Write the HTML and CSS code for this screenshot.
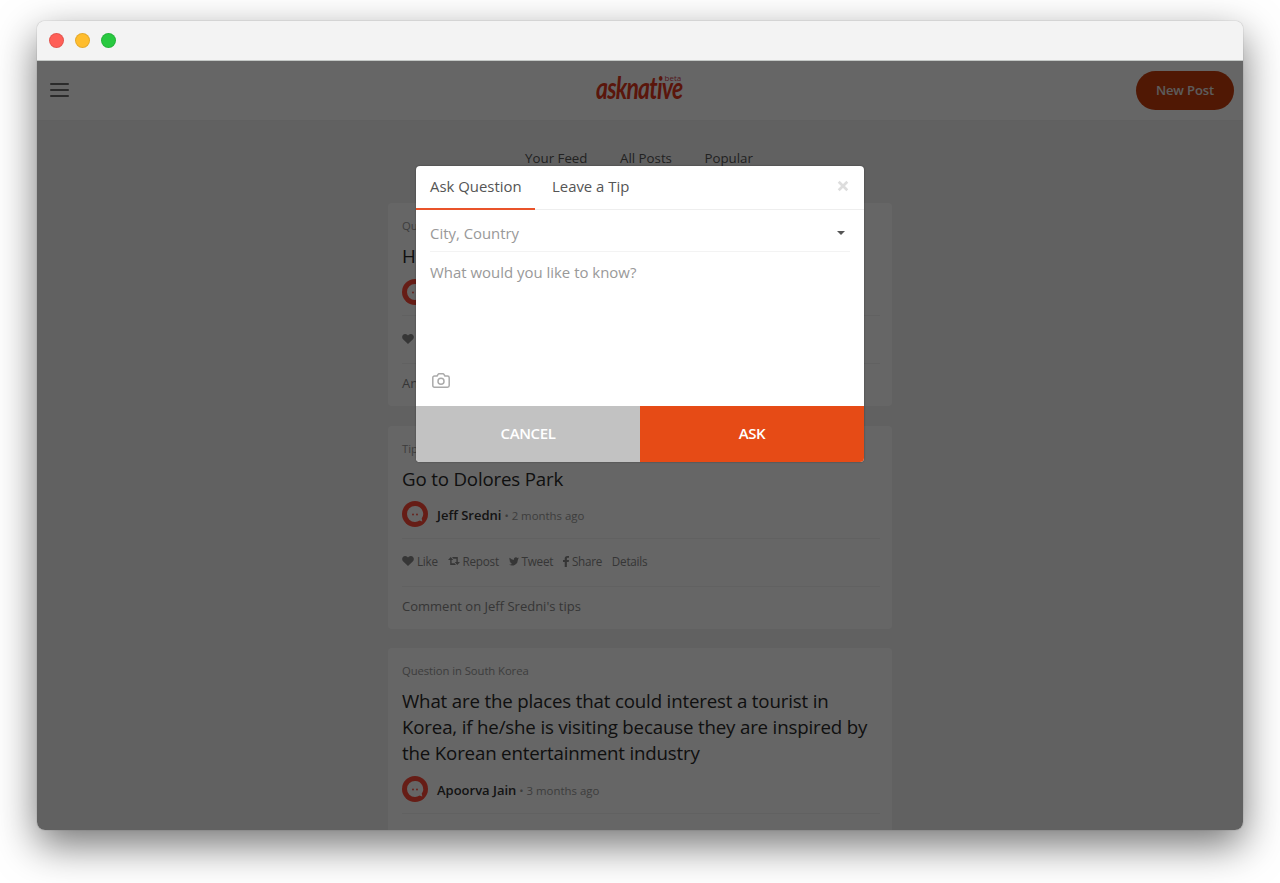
FILE: index.html
```html
<!DOCTYPE html>
<html lang="en">
<head>
<meta charset="utf-8">
<title>asknative</title>
<link rel="stylesheet" href="styles.css">
</head>
<body>
<svg class="defs" width="0" height="0">
  <symbol id="avatar" viewBox="0 0 26 26"><circle cx="13" cy="13" r="13" class="av-ring"/><path class="av-bubble" d="M13 5a8 8 0 1 0 0 16c1.800 0 3.200-.5 4.500-1.400l2.800.9-.6-2.900A8 8 0 0 0 13 5z"/><circle cx="11" cy="13.500" r=".9" class="av-ring"/><circle cx="15" cy="13.500" r=".9" class="av-ring"/></symbol>
  <symbol id="heart" viewBox="0 0 12 10"><path d="M6 10 1 5.300C-.7 3.500.2 0 3.200 0 4.600 0 5.500.8 6 1.600 6.500.8 7.400 0 8.800 0c3 0 3.900 3.500 2.200 5.300z"/></symbol>
  <symbol id="repost" viewBox="0 0 12 8"><path d="M2.700 0 5.300 3H3.600v3.200h3L8 8H2.200V3H0zM9.300 8 6.700 5h1.700V1.800h-3L4 0h5.800v5H12z"/></symbol>
  <symbol id="tweet" viewBox="0 0 24 20"><path d="M24 2.400a10 10 0 0 1-2.800.8A5 5 0 0 0 23.300.5a10 10 0 0 1-3.100 1.200 4.900 4.900 0 0 0-8.400 4.500A14 14 0 0 1 1.700 1a4.900 4.900 0 0 0 1.500 6.600A5 5 0 0 1 1 7a4.900 4.900 0 0 0 3.900 4.900 5 5 0 0 1-2.200.1 4.900 4.900 0 0 0 4.600 3.400A10 10 0 0 1 0 17.400a14 14 0 0 0 21.500-12.400A10 10 0 0 0 24 2.400z"/></symbol>
  <symbol id="share" viewBox="0 0 6 11"><path d="M6 0v1.800H4.900c-.8 0-1 .4-1 1V4H6l-.3 2H3.900v5H1.700V6H0V4h1.700V2.500C1.700.9 2.700 0 4.300 0z"/></symbol>
</svg>
<div class="window">
  <div class="titlebar"><i class="dot red"></i><i class="dot yellow"></i><i class="dot green"></i></div>
  <div class="page">
    <header class="header">
      <div class="menu"><i></i><i></i><i></i></div>
      <div class="logo"><span class="logo-name">asknative</span><span class="beta">beta</span></div>
      <button class="new-post">New Post</button>
    </header>
    <nav class="nav"><a>Your Feed</a><a>All Posts</a><a>Popular</a></nav>
    <main class="feed">
      <article class="card">
        <div class="kind">Qu</div>
        <h2>H</h2>
        <div class="author"><svg class="avatar"><use href="#avatar"/></svg></div>
        <div class="actions"><span><svg class="heart"><use href="#heart"/></svg></span></div>
        <div class="reply">An</div>
      </article>
      <article class="card">
        <div class="kind">Tip</div>
        <h2>Go to Dolores Park</h2>
        <div class="author"><svg class="avatar"><use href="#avatar"/></svg><b>Jeff Sredni</b><span>• 2 months ago</span></div>
        <div class="actions">
          <span><svg class="heart"><use href="#heart"/></svg>Like</span>
          <span><svg class="repost"><use href="#repost"/></svg>Repost</span>
          <span><svg class="tweet"><use href="#tweet"/></svg>Tweet</span>
          <span><svg class="share"><use href="#share"/></svg>Share</span>
          <span>Details</span>
        </div>
        <div class="reply">Comment on Jeff Sredni's tips</div>
      </article>
      <article class="card">
        <div class="kind">Question in South Korea</div>
        <h2>What are the places that could interest a tourist in<br>Korea, if he/she is visiting because they are inspired by<br>the Korean entertainment industry</h2>
        <div class="author"><svg class="avatar"><use href="#avatar"/></svg><b>Apoorva Jain</b><span>• 3 months ago</span></div>
        <div class="actions"></div>
      </article>
    </main>
    <div class="overlay">
      <section class="modal">
        <div class="tabs"><a class="tab active">Ask Question</a><a class="tab">Leave a Tip</a>
          <svg class="close" viewBox="0 0 12 12"><path d="M1.700 1.700l8.600 8.600M10.300 1.700l-8.600 8.600"/></svg>
        </div>
        <div class="city"><span>City, Country</span><i class="caret"></i></div>
        <div class="question">What would you like to know?</div>
        <svg class="camera" viewBox="0 0 18 15"><path d="M2.500 3h2.600l1-1.700q.3-.5.900-.5h4q.6 0 .9.500l1 1.700h2.600q1.700 0 1.700 1.700v7.800q0 1.700-1.700 1.700h-13q-1.700 0-1.700-1.700V4.700Q.8 3 2.500 3z"/><circle cx="9" cy="8.200" r="3"/></svg>
        <div class="buttons"><button class="cancel">CANCEL</button><button class="ask">ASK</button></div>
      </section>
    </div>
  </div>
</div>
</body>
</html>
```
FILE: styles.css
```css
* { box-sizing: border-box; }
body { margin: 0; height: 883px; overflow: hidden; background: #fff; font-family: "Open Sans", sans-serif; padding: 21px 37px; }
.defs { position: absolute; }
button { border: 0; font-family: inherit; padding: 0; }
.window { width: 1206px; height: 809px; border-radius: 8px; overflow: hidden; box-shadow: 0 0 1px rgba(0,0,0,.5), 0 15px 40px rgba(0,0,0,.55); }
.titlebar { height: 40px; background: #f3f3f3; border-bottom: 1px solid #c4c8c6; display: flex; align-items: center; gap: 11px; padding-left: 12px; }
.dot { width: 15px; height: 15px; border-radius: 50%; border: 1px solid rgba(0,0,0,.1); }
.red { background: #ff5f57; }
.yellow { background: #ffbd2e; }
.green { background: #28c940; }
.page { position: relative; height: 769px; background: #f3f3f3; overflow: hidden; }
.header { height: 60px; background: #fff; border-bottom: 1px solid #f0f0f0; display: grid; grid-template-columns: 1fr auto 1fr; align-items: center; padding: 0 9px 0 13px; }
.menu { display: flex; flex-direction: column; gap: 4px; width: 19px; margin-bottom: 1px; }
.menu i { height: 2px; background: #6b6b6b; border-radius: 1px; }
.logo { width: 93px; height: 38px; margin-bottom: 5px; display: grid; color: #e2381c; }
.logo > * { grid-area: 1 / 1; }
.logo-name { font: italic 700 30px/36px Lato, sans-serif; letter-spacing: -1px; transform: scaleX(.765); transform-origin: 0 0; white-space: nowrap; width: 0; }
.beta { margin: 6px 0 0 69px; font-size: 8px; line-height: 6px; height: 6px; color: #d04050; }
.new-post { justify-self: end; width: 98px; height: 39px; border-radius: 20px; background: #c93c0b; color: #e6e6e6; font-size: 13px; font-weight: 600; letter-spacing: -.1px; padding-bottom: 1px; }
.nav { height: 82px; display: flex; justify-content: center; gap: 32.500px; padding: 27px 2px 0 0; font-size: 13.300px; line-height: 20px; color: #555; }
.feed { width: 504px; margin: 0 auto; display: flex; flex-direction: column; gap: 19.500px; }
.card { background: #fff; border-radius: 4px; padding: 14px 12px 14px 14px; height: 203px; flex: none; }
.kind { font-size: 11.300px; line-height: 18px; letter-spacing: -.08px; color: #999; }
.card h2 { margin: 8px 0 9px; font-weight: 400; font-size: 18.700px; letter-spacing: -.17px; line-height: 26.200px; color: #2a2a2a; white-space: nowrap; }
.author { display: flex; align-items: center; height: 38px; padding-bottom: 10px; border-bottom: 1px solid #f3f3f3; font-size: 11.400px; color: #999; }
.author b { font-size: 13px; font-weight: 600; color: #333; margin: 0 3px 0 9px; padding-top: 1px; }
.author span { padding-top: 2px; }
.avatar { width: 26px; height: 26px; }
.av-ring { fill: #ff4a38; }
.av-bubble { fill: #fff; }
.actions { display: flex; align-items: center; gap: 9.700px; height: 48px; padding-bottom: 2px; border-bottom: 1px solid #f3f3f3; font-size: 11.700px; letter-spacing: -.23px; color: #888; fill: #888; }
.actions span { display: flex; align-items: center; gap: 3px; }
.heart { width: 12px; height: 10px; }
.repost { width: 12px; height: 8px; }
.tweet { width: 10px; height: 9px; }
.share { width: 6px; height: 11px; }
.reply { font-size: 13px; line-height: 38px; color: #888; }
.overlay { position: absolute; inset: 0; background: rgba(0,0,0,.6); display: flex; justify-content: center; align-items: flex-start; padding-top: 104.500px; }
.modal { width: 448px; height: 296px; background: #fff; border-radius: 4px; overflow: hidden; display: flex; flex-direction: column; box-shadow: 0 0 2px rgba(0,0,0,.4); }
.tabs { height: 44.500px; border-bottom: 1px solid #eee; display: flex; flex: none; }
.tab { font-size: 14.900px; line-height: 41px; height: 44.500px; padding: 0 14px; color: #555; white-space: nowrap; }
.tab.active { width: 119px; margin-right: 3px; border-bottom: 2px solid #e9532a; }
.close { width: 12px; height: 12px; margin: 14px 15px 0 auto; fill: none; stroke: #ddd; stroke-width: 2.700; }
.city { height: 42px; margin: 0 14px; border-bottom: 1px solid #f3f3f3; display: flex; align-items: center; justify-content: space-between; font-size: 14.900px; color: #999; padding: 4px 5px 0 0; }
.caret { border: 4.500px solid transparent; border-top-color: #555; border-bottom: 0; }
.question { margin: 8px 14px 0; font-size: 14.950px; line-height: 24px; color: #999; flex: 1; }
.camera { width: 18px; height: 15px; margin: 0 0 18px 16px; fill: none; stroke: #aaa; stroke-width: 1.500; flex: none; }
.buttons { display: flex; height: 56px; flex: none; }
.buttons button { flex: 1; color: #fff; font-size: 15px; font-weight: 600; letter-spacing: -.4px; padding-bottom: 1px; }
.cancel { background: #c2c2c2; }
.ask { background: #e64b16; }
```
